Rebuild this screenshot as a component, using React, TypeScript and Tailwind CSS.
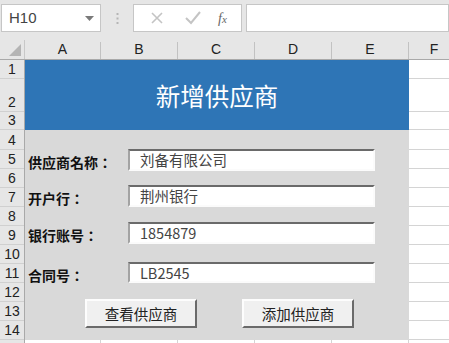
const cols = [
  { name: 'A', w: 'w-[76px]' },
  { name: 'B', w: 'w-[77px]' },
  { name: 'C', w: 'w-[77px]' },
  { name: 'D', w: 'w-[77px]' },
  { name: 'E', w: 'w-[77px]' },
];

const rows = [
  { n: '1', h: 'h-[19px]' },
  { n: '2', h: 'h-[33px]' },
  { n: '3', h: 'h-[18px]' },
  { n: '4', h: 'h-[20px]' },
  { n: '5', h: 'h-[19px]' },
  { n: '6', h: 'h-[19px]' },
  { n: '7', h: 'h-[19px]' },
  { n: '8', h: 'h-[19px]' },
  { n: '9', h: 'h-[19px]' },
  { n: '10', h: 'h-[19px]' },
  { n: '11', h: 'h-[19px]' },
  { n: '12', h: 'h-[19px]' },
  { n: '13', h: 'h-[19px]' },
  { n: '14', h: 'h-[19px]' },
  { n: '', h: 'h-[10px]' },
];

const cjk = { fontFamily: '"Noto Sans CJK SC", "Liberation Sans", sans-serif' };
// TC keeps the full-width colon centred in its box, like the reference
const cjkLabel = { fontFamily: '"Noto Sans CJK TC", "Noto Sans CJK SC", sans-serif' };

function Field({ label, value, mt, h }: { label: string; value: string; mt: string; h: string }) {
  return (
    <div className={`flex ${h} items-center ${mt}`}>
      <div className="w-[103px] pl-[3px] pt-[4px] text-[14px] leading-[18px] font-bold text-[#111]" style={cjkLabel}>
        {label}
      </div>
      <div
        className={`flex w-[247px] ${h} items-center border-2 border-t-[#6a6a6a] border-l-[#a3a3a3] border-r-[#fbfbfb] border-b-[#fbfbfb] bg-white pl-[10px] text-[14.5px] leading-[18px] text-[#444]`}
        style={cjk}
      >
        {value}
      </div>
    </div>
  );
}

function Button({ label }: { label: string }) {
  return (
    <div
      className="flex h-[29px] w-[112px] items-center justify-center border-2 border-t-[#fdfdfd] border-l-[#fdfdfd] border-r-[#6a6a6a] border-b-[#6a6a6a] bg-[#f0f0f0] text-[14.5px] leading-[18px] text-[#222]"
      style={cjk}
    >
      {label}
    </div>
  );
}

export default function App() {
  return (
    <div
      className="h-[343px] w-[449px] overflow-hidden bg-[#e6e6e6]"
      style={{ fontFamily: '"Liberation Sans", Arial, sans-serif' }}
    >
      {/* formula bar */}
      <div className="flex h-[40px] items-start pt-[4px] pl-[1px]">
        <div className="flex h-[28px] w-[100px] items-center justify-between border border-[#c6c6c6] bg-white pl-[7px] pr-[6px] text-[15px] text-[#444]">
          <span>H10</span>
          <svg width="9" height="5" viewBox="0 0 9 5">
            <path d="M0 0h9L4.5 5z" fill="#7a7a7a" />
          </svg>
        </div>
        <div className="flex h-[28px] w-[32px] items-center justify-center">
          <svg width="3" height="11" viewBox="0 0 3 11">
            <rect x="0.5" y="0" width="2" height="2" fill="#b5b5b5" />
            <rect x="0.5" y="4.5" width="2" height="2" fill="#b5b5b5" />
            <rect x="0.5" y="9" width="2" height="2" fill="#b5b5b5" />
          </svg>
        </div>
        <div className="flex h-[28px] w-[109px] items-center border border-[#c6c6c6] bg-white">
          <svg width="36" height="28" viewBox="0 0 36 28" className="ml-[10px]">
            <path d="M8 9l10 10M18 9L8 19" stroke="#c4c4c4" strokeWidth="1.6" />
          </svg>
          <svg width="36" height="28" viewBox="0 0 36 28">
            <path d="M6 14l5 5 9-11" stroke="#c4c4c4" strokeWidth="2" fill="none" />
          </svg>
          <span
            className="ml-[2px] text-[14px] italic text-[#666]"
            style={{ fontFamily: '"Liberation Serif", serif' }}
          >
            f<span className="text-[11px]">x</span>
          </span>
        </div>
        <div className="ml-[4px] h-[28px] flex-1 border border-[#c6c6c6] bg-white" />
      </div>

      {/* column headers */}
      <div className="flex h-[20px] border-b border-[#a9a9a9] text-[14px] text-[#222]">
        <div className="relative w-[25px] border-r border-[#c8c8c8]">
          <svg width="12" height="12" viewBox="0 0 12 12" className="absolute right-[3px] bottom-[3px]">
            <path d="M12 0v12H0z" fill="#b4b4b4" />
          </svg>
        </div>
        {cols.map((c) => (
          <div key={c.name} className={`flex ${c.w} items-end`}>
            <span className="flex-1 pb-[1px] text-center leading-[17px]">{c.name}</span>
            <span className="h-[17px] w-px bg-[#c2c2c2]" />
          </div>
        ))}
        <div className="flex flex-1 items-end justify-center pb-[1px] pl-[10px] leading-[17px]">F</div>
      </div>

      {/* grid body */}
      <div className="flex">
        <div className="w-[25px] border-r border-[#a9a9a9] text-[14px] text-[#222]">
          {rows.map((r, i) => (
            <div
              key={i}
              className={`flex ${r.h} items-end justify-center border-b border-[#d0d0d0] leading-[17px]`}
            >
              {r.n}
            </div>
          ))}
        </div>

        <div className="w-[384px]">
          <div
            className="flex h-[70px] items-center justify-center bg-[#2e75b6] pt-[3px] text-[24.5px] text-white"
            style={cjk}
          >
            新增供应商
          </div>
          <div className="flex h-[210px] flex-col bg-[#d9d9d9]">
            <Field label="供应商名称：" value="刘备有限公司" mt="mt-[19px]" h="h-[22px]" />
            <Field label="开户行：" value="荆州银行" mt="mt-[14px]" h="h-[22px]" />
            <Field label="银行账号：" value="1854879" mt="mt-[15px]" h="h-[22px]" />
            <Field label="合同号：" value="LB2545" mt="mt-[18px]" h="h-[21px]" />
            <div className="mt-[16px] flex gap-[45px] pl-[60px]">
              <Button label="查看供应商" />
              <Button label="添加供应商" />
            </div>
          </div>
          <div className="flex h-[10px] bg-white">
            {cols.map((c) => (
              <div key={c.name} className={`${c.w} border-r border-[#d4d4d4]`} />
            ))}
          </div>
        </div>

        <div className="flex-1 bg-white">
          {rows.map((r, i) => (
            <div key={i} className={`${r.h} border-b border-[#d4d4d4]`} />
          ))}
        </div>
      </div>
    </div>
  );
}
